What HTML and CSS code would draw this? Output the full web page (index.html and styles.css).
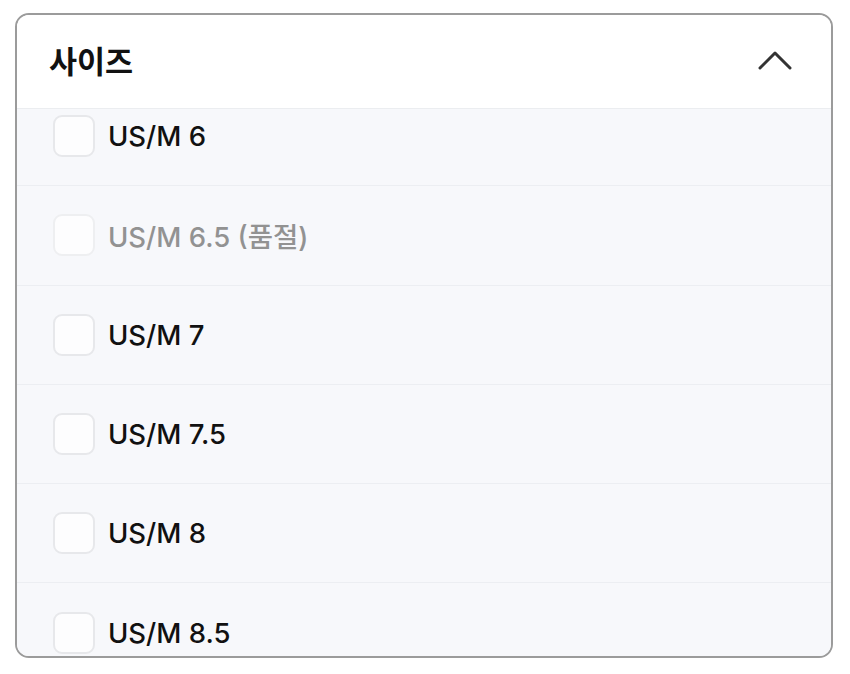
FILE: index.html
```html
<!DOCTYPE html>
<html lang="ko">
<head>
  <meta charset="UTF-8">
  <title>사이즈 필터</title>
  <link rel="stylesheet" href="styles.css">
</head>
<body>
  <div class="filter">
    <div class="filter-head">
      <span class="filter-title">사이즈</span>
      <svg class="chevron" width="34" height="20" viewBox="0 0 34 20">
        <path d="M2 18 L17 3 L32 18" fill="none" stroke="#333" stroke-width="3" stroke-linecap="round" stroke-linejoin="round"/>
      </svg>
    </div>

    <div class="filter-body">
      <ul class="size-list">
        <li class="size-row"><span class="check"></span><span class="label">US/M 6</span></li>
        <li class="size-row sold-out"><span class="check"></span><span class="label">US/M 6.5 (품절)</span></li>
        <li class="size-row"><span class="check"></span><span class="label">US/M 7</span></li>
        <li class="size-row"><span class="check"></span><span class="label">US/M 7.5</span></li>
        <li class="size-row"><span class="check"></span><span class="label">US/M 8</span></li>
        <li class="size-row"><span class="check"></span><span class="label">US/M 8.5</span></li>
      </ul>
    </div>
  </div>
</body>
</html>
```

FILE: styles.css
```css
body {
  margin: 0;
  background: #ffffff;
  font-family: Inter, "Noto Sans CJK KR", sans-serif;
  color: #111111;
}
.filter {
  margin: 13px 17px 0 15px;
  height: 641px;
  border: 2px solid #9b9b9b;
  border-radius: 14px;
  overflow: hidden;
  display: flex;
  flex-direction: column;
}
.filter-head {
  flex: none;
  height: 93px;
  display: flex;
  align-items: center;
  justify-content: space-between;
  padding: 0 39px 0 32px;
  border-bottom: 1px solid #ebedf0;
  background: #ffffff;
}
.filter-title {
  font-family: "Noto Sans CJK KR", sans-serif;
  font-size: 30.5px;
  font-weight: 700;
  letter-spacing: 0;
  margin-top: -4px;
}
.chevron {
  display: block;
  margin-top: -4px;
}
.filter-body {
  flex: 1;
  overflow: hidden;
  background: #f7f8fb;
}
.size-list {
  list-style: none;
  margin: -22px 0 0;
  padding: 0;
}
.size-row {
  height: 98.3px;
  display: flex;
  align-items: center;
  gap: 13px;
  padding-left: 36px;
  border-bottom: 1px solid #eceef2;
}
.check {
  width: 38px;
  height: 38px;
  border: 2px solid #e7e8eb;
  border-radius: 9px;
  background: #fdfdfe;
}
.label {
  font-size: 27.5px;
  font-weight: 500;
  letter-spacing: 0;
}
.sold-out .label {
  color: #929292;
}
.sold-out .check {
  border-color: #eeeff1;
}
```
